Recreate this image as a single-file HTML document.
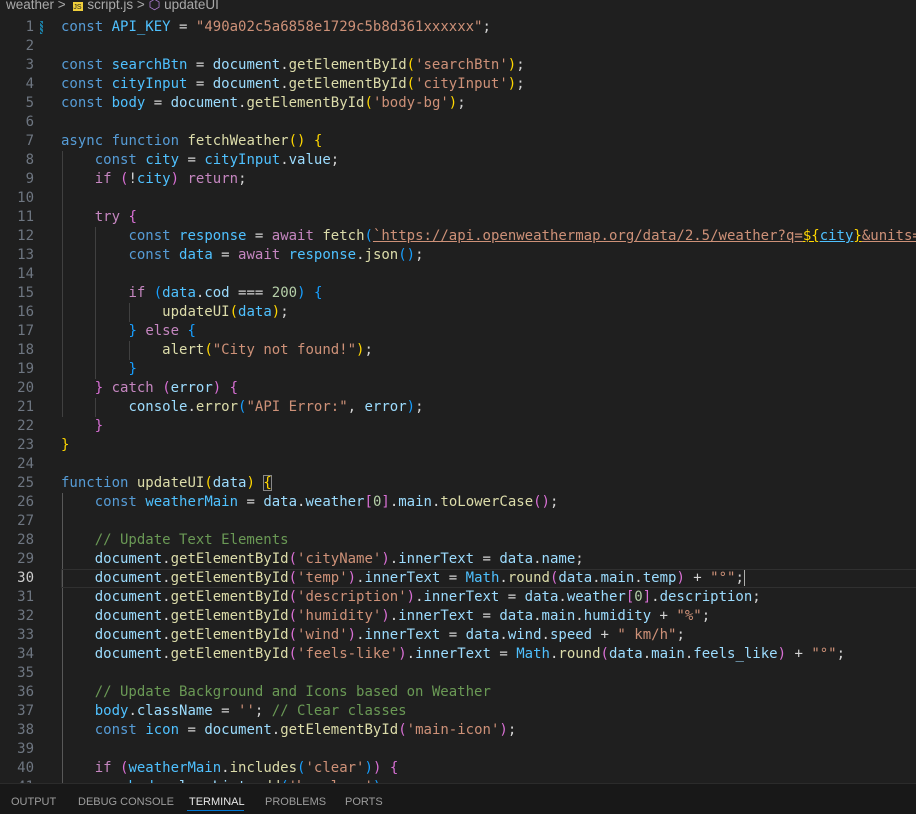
<!DOCTYPE html>
<html><head><meta charset="utf-8"><style>
html,body{margin:0;padding:0;background:#1f1f1f;width:916px;height:814px;overflow:hidden}
body{position:relative;font-family:"DejaVu Sans Mono","Liberation Mono",monospace;font-size:14px;color:#d4d4d4}
.bc{position:absolute;top:-3px;left:6px;height:16px;font-family:"Liberation Sans",sans-serif;font-size:13.5px;color:#a9a9a9;white-space:nowrap;line-height:16px}
.bc .js{display:inline-block;width:10px;height:9px;background:#f0cf3b;color:#1f1f1f;font-size:7px;line-height:12px;vertical-align:0;margin:0 4px}
.code{position:absolute;top:18px;left:0;width:916px;overflow:hidden}
.l{height:19px;line-height:19px;white-space:pre;position:relative;overflow:hidden}
.n{position:absolute;left:0;width:34px;text-align:right;color:#6e7681}
.t{position:absolute;left:61px}
.act .n{color:#cccccc}
.actbox{position:absolute;left:61px;right:0;top:0;height:17px;border:1px solid #303030;border-right:none}
.k{color:#569cd6}.c{color:#c586c0}.v{color:#9cdcfe}.C{color:#4fc1ff}.f{color:#dcdcaa}.s{color:#ce9178}.nu{color:#b5cea8}.cm{color:#6a9955}
.g{color:#ffd700}.p{color:#da70d6}.b{color:#179fff}
.guide{position:absolute;width:1px;background:#404040}
.panel{position:absolute;left:0;top:783px;width:916px;height:31px;background:#181818;border-top:1px solid #2b2b2b;font-family:"Liberation Sans",sans-serif;font-size:11px;color:#9d9d9d}
.panel span{position:absolute;top:12px}
</style></head><body>
<div class="bc">weather &gt; <span class="js">JS</span>script.js &gt; <span style="color:#b180d7">⬡</span> updateUI</div>
<div class="guide" style="left:62px;top:151px;height:266px"></div>
<div class="guide" style="left:95px;top:227px;height:152px"></div>
<div class="guide" style="left:129px;top:303px;height:19px"></div>
<div class="guide" style="left:129px;top:341px;height:19px"></div>
<div class="guide" style="left:95px;top:398px;height:19px"></div>
<div class="guide" style="left:62px;top:493px;height:290px;background:#585858"></div>
<div style="position:absolute;left:40px;top:21px;width:3px;height:13px;background:repeating-linear-gradient(45deg,#1b81a8 0 2px,#1f1f1f 2px 3px)"></div>
<div class="code">
<div class="l"><span class="n">1</span><span class="t"><span class="k">const</span> <span class="C">API_KEY</span> = <span class="s">"490a02c5a6858e1729c5b8d361xxxxxx"</span>;</span></div>
<div class="l"><span class="n">2</span></div>
<div class="l"><span class="n">3</span><span class="t"><span class="k">const</span> <span class="C">searchBtn</span> = <span class="v">document</span>.<span class="f">getElementById</span><span class="g">(</span><span class="s">'searchBtn'</span><span class="g">)</span>;</span></div>
<div class="l"><span class="n">4</span><span class="t"><span class="k">const</span> <span class="C">cityInput</span> = <span class="v">document</span>.<span class="f">getElementById</span><span class="g">(</span><span class="s">'cityInput'</span><span class="g">)</span>;</span></div>
<div class="l"><span class="n">5</span><span class="t"><span class="k">const</span> <span class="C">body</span> = <span class="v">document</span>.<span class="f">getElementById</span><span class="g">(</span><span class="s">'body-bg'</span><span class="g">)</span>;</span></div>
<div class="l"><span class="n">6</span></div>
<div class="l"><span class="n">7</span><span class="t"><span class="k">async</span> <span class="k">function</span> <span class="f">fetchWeather</span><span class="g">()</span> <span class="g">{</span></span></div>
<div class="l"><span class="n">8</span><span class="t">    <span class="k">const</span> <span class="C">city</span> = <span class="C">cityInput</span>.<span class="v">value</span>;</span></div>
<div class="l"><span class="n">9</span><span class="t">    <span class="c">if</span> <span class="p">(</span>!<span class="C">city</span><span class="p">)</span> <span class="c">return</span>;</span></div>
<div class="l"><span class="n">10</span></div>
<div class="l"><span class="n">11</span><span class="t">    <span class="c">try</span> <span class="p">{</span></span></div>
<div class="l"><span class="n">12</span><span class="t">        <span class="k">const</span> <span class="C">response</span> = <span class="c">await</span> <span class="f">fetch</span><span class="b">(</span><span class="s" style="text-decoration:underline">`https://api.openweathermap.org/data/2.5/weather?q=</span><span class="g" style="text-decoration:underline">${</span><span class="C" style="text-decoration:underline">city</span><span class="g" style="text-decoration:underline">}</span><span class="s" style="text-decoration:underline">&amp;units=</span></span></div>
<div class="l"><span class="n">13</span><span class="t">        <span class="k">const</span> <span class="C">data</span> = <span class="c">await</span> <span class="C">response</span>.<span class="f">json</span><span class="b">()</span>;</span></div>
<div class="l"><span class="n">14</span></div>
<div class="l"><span class="n">15</span><span class="t">        <span class="c">if</span> <span class="b">(</span><span class="C">data</span>.<span class="v">cod</span> === <span class="nu">200</span><span class="b">)</span> <span class="b">{</span></span></div>
<div class="l"><span class="n">16</span><span class="t">            <span class="f">updateUI</span><span class="g">(</span><span class="C">data</span><span class="g">)</span>;</span></div>
<div class="l"><span class="n">17</span><span class="t">        <span class="b">}</span> <span class="c">else</span> <span class="b">{</span></span></div>
<div class="l"><span class="n">18</span><span class="t">            <span class="f">alert</span><span class="g">(</span><span class="s">"City not found!"</span><span class="g">)</span>;</span></div>
<div class="l"><span class="n">19</span><span class="t">        <span class="b">}</span></span></div>
<div class="l"><span class="n">20</span><span class="t">    <span class="p">}</span> <span class="c">catch</span> <span class="p">(</span><span class="v">error</span><span class="p">)</span> <span class="p">{</span></span></div>
<div class="l"><span class="n">21</span><span class="t">        <span class="v">console</span>.<span class="f">error</span><span class="b">(</span><span class="s">"API Error:"</span>, <span class="v">error</span><span class="b">)</span>;</span></div>
<div class="l"><span class="n">22</span><span class="t">    <span class="p">}</span></span></div>
<div class="l"><span class="n">23</span><span class="t"><span class="g">}</span></span></div>
<div class="l"><span class="n">24</span></div>
<div class="l"><span class="n">25</span><span class="t"><span class="k">function</span> <span class="f">updateUI</span><span class="g">(</span><span class="v">data</span><span class="g">)</span> <span class="g" style="outline:1px solid #888;outline-offset:-1px">{</span></span></div>
<div class="l"><span class="n">26</span><span class="t">    <span class="k">const</span> <span class="C">weatherMain</span> = <span class="v">data</span>.<span class="v">weather</span><span class="p">[</span><span class="nu">0</span><span class="p">]</span>.<span class="v">main</span>.<span class="f">toLowerCase</span><span class="p">()</span>;</span></div>
<div class="l"><span class="n">27</span></div>
<div class="l"><span class="n">28</span><span class="t">    <span class="cm">// Update Text Elements</span></span></div>
<div class="l"><span class="n">29</span><span class="t">    <span class="v">document</span>.<span class="f">getElementById</span><span class="p">(</span><span class="s">'cityName'</span><span class="p">)</span>.<span class="v">innerText</span> = <span class="v">data</span>.<span class="v">name</span>;</span></div>
<div class="l act"><div class="actbox"></div><span class="n">30</span><span class="t">    <span class="v">document</span>.<span class="f">getElementById</span><span class="p">(</span><span class="s">'temp'</span><span class="p">)</span>.<span class="v">innerText</span> = <span class="C">Math</span>.<span class="f">round</span><span class="p">(</span><span class="v">data</span>.<span class="v">main</span>.<span class="v">temp</span><span class="p">)</span> + <span class="s">"°"</span>;<span style="border-left:1.5px solid #aeafad"></span></span></div>
<div class="l"><span class="n">31</span><span class="t">    <span class="v">document</span>.<span class="f">getElementById</span><span class="p">(</span><span class="s">'description'</span><span class="p">)</span>.<span class="v">innerText</span> = <span class="v">data</span>.<span class="v">weather</span><span class="p">[</span><span class="nu">0</span><span class="p">]</span>.<span class="v">description</span>;</span></div>
<div class="l"><span class="n">32</span><span class="t">    <span class="v">document</span>.<span class="f">getElementById</span><span class="p">(</span><span class="s">'humidity'</span><span class="p">)</span>.<span class="v">innerText</span> = <span class="v">data</span>.<span class="v">main</span>.<span class="v">humidity</span> + <span class="s">"%"</span>;</span></div>
<div class="l"><span class="n">33</span><span class="t">    <span class="v">document</span>.<span class="f">getElementById</span><span class="p">(</span><span class="s">'wind'</span><span class="p">)</span>.<span class="v">innerText</span> = <span class="v">data</span>.<span class="v">wind</span>.<span class="v">speed</span> + <span class="s">" km/h"</span>;</span></div>
<div class="l"><span class="n">34</span><span class="t">    <span class="v">document</span>.<span class="f">getElementById</span><span class="p">(</span><span class="s">'feels-like'</span><span class="p">)</span>.<span class="v">innerText</span> = <span class="C">Math</span>.<span class="f">round</span><span class="p">(</span><span class="v">data</span>.<span class="v">main</span>.<span class="v">feels_like</span><span class="p">)</span> + <span class="s">"°"</span>;</span></div>
<div class="l"><span class="n">35</span></div>
<div class="l"><span class="n">36</span><span class="t">    <span class="cm">// Update Background and Icons based on Weather</span></span></div>
<div class="l"><span class="n">37</span><span class="t">    <span class="C">body</span>.<span class="v">className</span> = <span class="s">''</span>; <span class="cm">// Clear classes</span></span></div>
<div class="l"><span class="n">38</span><span class="t">    <span class="k">const</span> <span class="C">icon</span> = <span class="v">document</span>.<span class="f">getElementById</span><span class="p">(</span><span class="s">'main-icon'</span><span class="p">)</span>;</span></div>
<div class="l"><span class="n">39</span></div>
<div class="l"><span class="n">40</span><span class="t">    <span class="c">if</span> <span class="p">(</span><span class="C">weatherMain</span>.<span class="f">includes</span><span class="b">(</span><span class="s">'clear'</span><span class="b">)</span><span class="p">)</span> <span class="p">{</span></span></div>
<div class="l"><span class="n">41</span><span class="t">        <span class="C">body</span>.<span class="v">classList</span>.<span class="f">add</span><span class="b">(</span><span class="s">'bg-clear'</span><span class="b">)</span>;</span></div>
</div>
<div class="panel">
<span style="left:11px">OUTPUT</span>
<span style="left:78px">DEBUG CONSOLE</span>
<span style="left:189px;color:#e7e7e7">TERMINAL</span>
<div style="position:absolute;left:187px;top:26px;width:57px;height:1px;background:#0078d4"></div>
<span style="left:265px">PROBLEMS</span>
<span style="left:345px">PORTS</span>
</div>
</body></html>
